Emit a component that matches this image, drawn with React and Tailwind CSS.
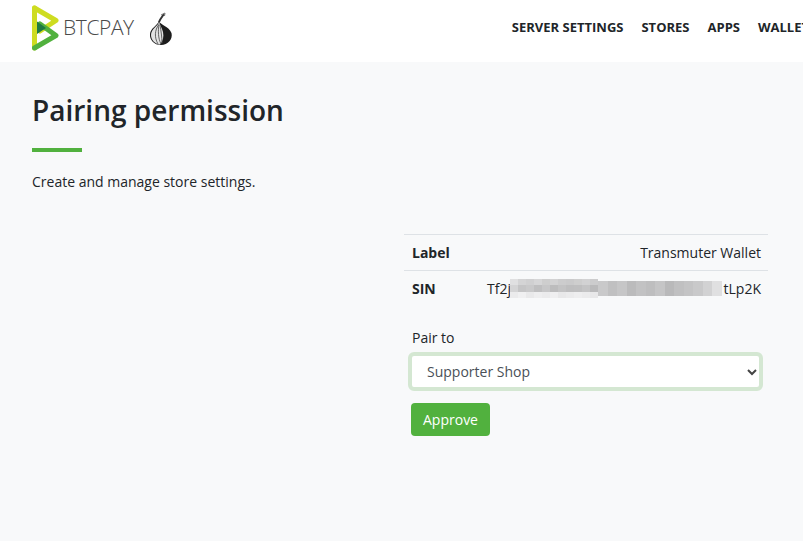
import React from 'react';

const font = { fontFamily: '"Open Sans", sans-serif' };

// pixelated blur that hides the middle of the SIN
const blurTop = ['#e0e0e1', '#d4d4d5', '#d0d0d1', '#d6d6d7', '#cecece', '#d2d2d3', '#cccccd', '#cacacb', '#cecece', '#d2d2d3', '#cccccd'];
const blurMid = ['#d4d4d5', '#c5c5c6', '#c9c9ca', '#bfbfc0', '#c7c7c8', '#bcbcbd', '#c3c3c4', '#bebebf', '#bfbfc0', '#c4c4c5', '#bababb'];
const blurLow = ['#ebebec', '#f0f0f1', '#e9e9ea', '#eeeeef', '#ebebec', '#efeff0', '#e8e8e9', '#ebebec', '#eeeeef', '#ebebec', '#e8e8e9'];
const blurRight = ['#c9c9ca', '#c0c0c1', '#c6c6c7', '#bbbbbc', '#c2c2c3', '#bebebf', '#c5c5c6', '#b9b9ba', '#c0c0c1', '#c4c4c5', '#c9c9ca', '#d2d2d3', '#e0e0e1'];

function BtcpayLogo() {
  return (
    <svg width="27" height="46" viewBox="0 0 27 46" className="shrink-0">
      <path d="M2.5 3 L2.5 43" stroke="#cedc21" strokeWidth="5" strokeLinecap="round" />
      <path d="M2.5 3 L24 15.5 L8 26" fill="none" stroke="#cedc21" strokeWidth="5" strokeLinejoin="round" strokeLinecap="round" />
      <path d="M8 19 L24 30.5 L2.5 43" fill="none" stroke="#51b13e" strokeWidth="5" strokeLinejoin="round" strokeLinecap="round" />
      <path d="M5 16.5 L14 23 L5 29 Z" fill="#1e7a44" />
    </svg>
  );
}

function TorOnion() {
  return (
    <svg width="26" height="34" viewBox="0 0 26 34" className="shrink-0">
      <path d="M11 10 C12 7 14 5 16 2" fill="none" stroke="#333" strokeWidth="2" />
      <path d="M13 3 L17 1 L16.5 4" fill="none" stroke="#777" strokeWidth="1" />
      <path d="M11 9 C12 13 21 14 23.5 21 C25 27 20 33 13 33 C6 33 1.5 28 2 22 C2.5 16 9 14 11 9 Z" fill="#1c1c1c" />
      <path d="M11 10 C10 14 3 17 3 23 C3 28 7 32 12 32.5 C15 29 16 25 15 20 C14 16 12 13 11 10 Z" fill="#e2e2e2" />
      <path d="M10.5 13 C7 18 6 25 10 32 M11 12 C10 19 10 26 13 32 M12 13 C13 19 14 25 14 31" fill="none" stroke="#555" strokeWidth="0.9" />
    </svg>
  );
}

export default function App() {
  return (
    <div className="h-[541px] w-[803px] overflow-hidden bg-[#f8f9fa] text-[#212529]" style={font}>
      <header className="flex h-[62px] items-center bg-white pb-[6px] pl-8">
        <BtcpayLogo />
        <span className="ml-[4px] mb-[2px] shrink-0 text-[21px] font-light leading-none tracking-[-0.4px] text-[#4a4a4a]">BTCPAY</span>
        <span className="ml-[14px] mt-[1px] shrink-0"><TorOnion /></span>
        <nav className="ml-[338px] mb-[2px] flex shrink-0 gap-[18px] whitespace-nowrap text-[13px] font-bold leading-none text-[#212529]">
          <span>SERVER SETTINGS</span>
          <span>STORES</span>
          <span>APPS</span>
          <span>WALLETS</span>
        </nav>
      </header>

      <main className="px-8 pt-[28px]">
        <h2 className="text-[28px] font-semibold leading-[40px]">Pairing permission</h2>
        <div className="mt-[18px] h-1 w-[50px] bg-[#51b13e]" />
        <p className="mt-[19px] text-[14px] leading-[21px]">Create and manage store settings.</p>

        <div className="mt-[42px] flex justify-end pr-[3px]">
          <div className="w-[364px] text-[14px]">
            <div className="flex h-9 items-center justify-between border-t border-[#dee2e6] pl-2 pr-[7px]">
              <span className="font-bold">Label</span>
              <span>Transmuter Wallet</span>
            </div>
            <div className="flex h-9 items-center border-t border-[#dee2e6] pl-2 pr-[7px]">
              <span className="w-[75px] shrink-0 font-bold">SIN</span>
              <span className="w-[23px] shrink-0">Tf2j</span>
              <div className="flex shrink-0 flex-col">
                <div className="flex h-[6px]">
                  {blurTop.map((c, i) => <div key={i} className="h-full w-2" style={{ background: c }} />)}
                </div>
                <div className="flex h-[7px]">
                  {blurMid.map((c, i) => <div key={i} className="h-full w-2" style={{ background: c }} />)}
                </div>
                <div className="flex h-[6px]">
                  {blurLow.map((c, i) => <div key={i} className="h-full w-2" style={{ background: c }} />)}
                </div>
              </div>
              <div className="flex h-[15px] shrink-0">
                {blurRight.map((c, i) => <div key={i} className="h-full w-[9.5px]" style={{ background: c }} />)}
              </div>
              <span className="ml-auto">tLp2K</span>
            </div>

            <div className="mt-[21px] pl-2 leading-[21px]">Pair to</div>
            <div className="relative ml-1 mr-[5px] mt-1">
              <select className="h-[39px] w-full appearance-none rounded-[6px] border-4 border-[#d4e7d2] bg-white pl-[15px] text-[14px] text-[#495057] outline-none">
                <option>Supporter Shop</option>
              </select>
              <svg width="10" height="8" viewBox="0 0 10 8" className="absolute right-[6px] top-4">
                <path d="M1 2 L5 6 L9 2" fill="none" stroke="#444" strokeWidth="2" />
              </svg>
            </div>
            <button className="ml-[7px] mt-3 block h-[33px] w-[79px] rounded-[4px] bg-[#51b13e] text-center text-[14px] font-medium text-white">
              Approve
            </button>
          </div>
        </div>
      </main>
    </div>
  );
}
